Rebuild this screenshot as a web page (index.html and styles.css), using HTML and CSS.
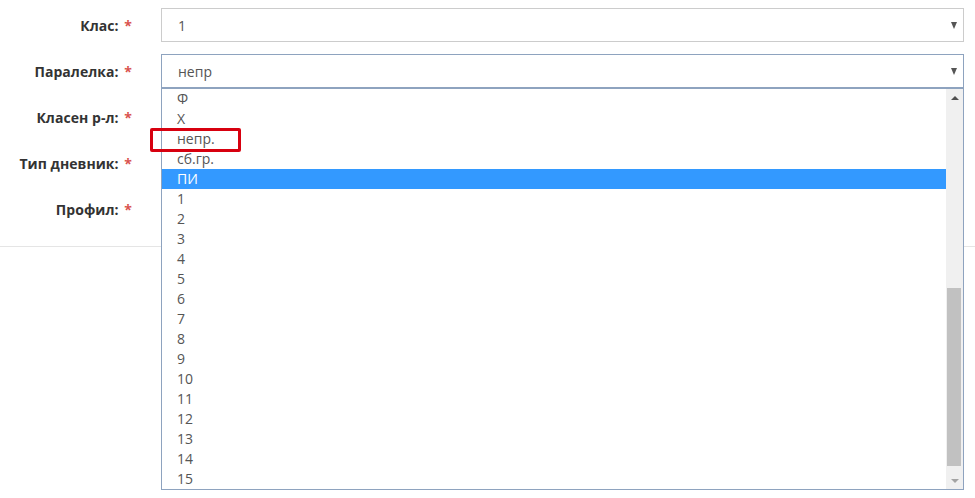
FILE: index.html
```html
<!DOCTYPE html>
<html lang="bg">
<head>
<meta charset="utf-8">
<link rel="stylesheet" href="styles.css">
</head>
<body>
<div class="form">
  <div class="row">
    <label class="lbl">Клас: <span class="req">*</span></label>
    <div class="select"><span>1</span><span class="caret"></span></div>
  </div>
  <div class="row">
    <label class="lbl">Паралелка: <span class="req">*</span></label>
    <div class="select open"><span>непр</span><span class="caret"></span></div>
  </div>
  <div class="row">
    <label class="lbl">Класен р-л: <span class="req">*</span></label>
    <div class="select"></div>
  </div>
  <div class="row">
    <label class="lbl">Тип дневник: <span class="req">*</span></label>
    <div class="select"></div>
  </div>
  <div class="row">
    <label class="lbl">Профил: <span class="req">*</span></label>
    <div class="select"></div>
  </div>
</div>

<div class="dropdown">
  <ul class="options">
    <li>Ф</li>
    <li>Х</li>
    <li>непр.</li>
    <li>сб.гр.</li>
    <li class="sel">ПИ</li>
    <li>1</li>
    <li>2</li>
    <li>3</li>
    <li>4</li>
    <li>5</li>
    <li>6</li>
    <li>7</li>
    <li>8</li>
    <li>9</li>
    <li>10</li>
    <li>11</li>
    <li>12</li>
    <li>13</li>
    <li>14</li>
    <li>15</li>
  </ul>
  <div class="scrollbar">
    <div class="sb-btn"><span class="tri-up"></span></div>
    <div class="sb-track"><div class="sb-thumb"></div></div>
    <div class="sb-btn"><span class="tri-down"></span></div>
  </div>
</div>

<div class="highlight-box"></div>
</body>
</html>
```

FILE: styles.css
```css
* { box-sizing: border-box; }
html, body { margin: 0; padding: 0; background: #fff; }
body {
  font-family: "Open Sans", "Noto Sans", sans-serif;
  font-size: 14px;
  color: #555;
  width: 975px;
  height: 498px;
  overflow: hidden;
  position: relative;
}
.form {
  padding: 8px 11px 20px 0;
  border-bottom: 1px solid #e5e5e5;
  display: flex;
  flex-direction: column;
  gap: 12px;
}
.row {
  display: flex;
  align-items: center;
  height: 34px;
}
.lbl {
  width: 132px;
  margin-right: 29px;
  text-align: right;
  font-weight: 700;
  color: #333;
  white-space: nowrap;
  letter-spacing: 0.05px;
}
.req { color: #d9534f; margin-left: 2px; }
.select {
  flex: 1;
  height: 34px;
  border: 1px solid #ccc;
  display: flex;
  align-items: center;
  justify-content: space-between;
  padding: 0 6px 0 16px;
  color: #555;
}
.select.open { border-color: #8ea3bf; }
.caret {
  width: 0; height: 0;
  border-left: 3.5px solid transparent;
  border-right: 3.5px solid transparent;
  border-top: 7px solid #555;
}
.dropdown {
  position: absolute;
  left: 161px;
  top: 88px;
  width: 803px;
  height: 402px;
  border: 1px solid #8ea3bf;
  background: #fff;
  display: flex;
}
.options {
  list-style: none;
  margin: 0;
  padding: 0;
  flex: 1;
}
.options li {
  height: 20px;
  line-height: 20px;
  padding-left: 15px;
  color: #555;
}
.options li.sel { background: #3399ff; color: #fff; }
.scrollbar {
  width: 17px;
  background: #f0f0f0;
  display: flex;
  flex-direction: column;
}
.sb-btn {
  height: 17px;
  display: flex;
  align-items: center;
  justify-content: center;
}
.sb-track {
  flex: 1;
  position: relative;
}
.sb-thumb {
  position: absolute;
  left: 1px;
  right: 2px;
  top: 182px;
  bottom: 6px;
  background: #c1c1c1;
}
.tri-up, .tri-down {
  width: 0; height: 0;
  border-left: 4px solid transparent;
  border-right: 4px solid transparent;
}
.tri-up { border-bottom: 4px solid #505050; }
.tri-down { border-top: 4px solid #a3a3a3; }
.highlight-box {
  position: absolute;
  left: 150px;
  top: 128px;
  width: 91px;
  height: 24px;
  border: 3px solid #d7000f;
  border-radius: 2px;
}
```
